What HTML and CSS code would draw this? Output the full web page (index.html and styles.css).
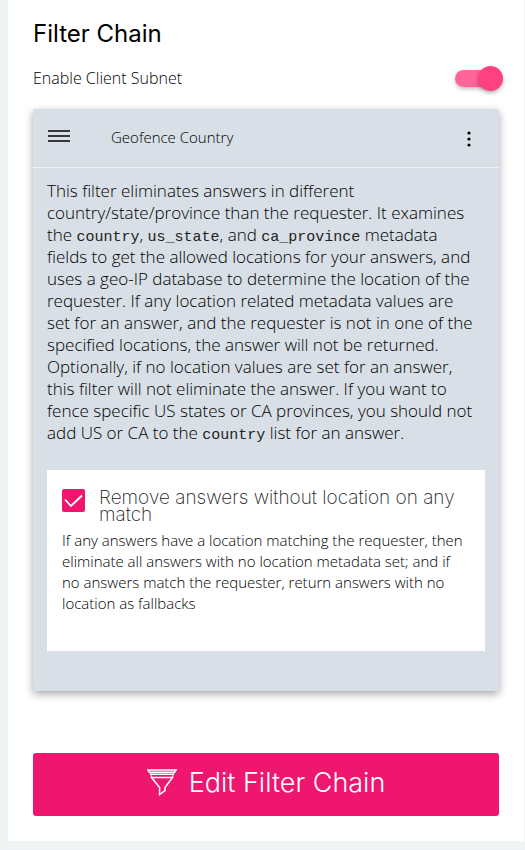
FILE: index.html
```html
<!DOCTYPE html>
<html lang="en">
<head>
<meta charset="utf-8">
<title>Filter Chain</title>
<link rel="stylesheet" href="styles.css">
</head>
<body>
<main class="panel">
  <h1 class="title">Filter Chain</h1>
  <div class="subnet">
    <label for="subnet">Enable Client Subnet</label>
    <input class="switch" type="checkbox" role="switch" id="subnet" checked>
  </div>
  <section class="card">
    <header class="card-head">
      <button class="icon-btn" type="button" aria-label="Reorder">
        <svg width="23" height="12" viewBox="0 0 23 12"><path d="M1 1h22M1 6h22M1 11h22" stroke="#000" stroke-width="1.7"/></svg>
      </button>
      <h2 class="card-title">Geofence Country</h2>
      <button class="icon-btn" type="button" aria-label="More options">
        <svg width="4" height="16" viewBox="0 0 4 16"><circle cx="2" cy="2" r="1.6"/><circle cx="2" cy="8" r="1.6"/><circle cx="2" cy="14" r="1.6"/></svg>
      </button>
    </header>
    <div class="card-body">
      <p class="description">This filter eliminates answers in different<br>
        country/state/province than the requester. It examines<br>
        the <code>country</code>, <code>us_state</code>, and <code>ca_province</code> metadata<br>
        fields to get the allowed locations for your answers, and<br>
        uses a geo-IP database to determine the location of the<br>
        requester. If any location related metadata values are<br>
        set for an answer, and the requester is not in one of the<br>
        specified locations, the answer will not be returned.<br>
        Optionally, if no location values are set for an answer,<br>
        this filter will not eliminate the answer. If you want to<br>
        fence specific US states or CA provinces, you should not<br>
        add US or CA to the <code>country</code> list for an answer.</p>
      <div class="option">
        <div class="option-head">
          <span class="check">
            <input type="checkbox" id="remove" aria-describedby="remove-help" checked>
            <svg width="23" height="23" viewBox="0 0 23 23"><path d="M3 10.5l6 6.5L20 6.5" fill="none" stroke="#fff" stroke-width="1.8"/></svg>
          </span>
          <label for="remove">Remove answers without location on any match</label>
        </div>
        <p class="help" id="remove-help">If any answers have a location matching the requester, then eliminate all answers with no location metadata set; and if no answers match the requester, return answers with no location as fallbacks</p>
      </div>
    </div>
  </section>
  <button class="edit" type="button">
    <svg width="30" height="27" viewBox="0 0 30 27" fill="none" stroke="#fff" stroke-width="1.5"><path d="M.8 1h28.4L27.5 3.2H2.5zM3 5.3h24M4.5 8.5h21L18 18.5v3.2L12.6 25.5v-7z"/><path d="M2.5 3.2l2.5 5M27.5 3.2L25 8.5" stroke-width="1"/></svg>
    Edit Filter Chain
  </button>
</main>
</body>
</html>
```

FILE: styles.css
```css
* { box-sizing: border-box; }

body {
  margin: 0;
  background: #f0f4f5;
  color: #000;
  font: 300 15px/21px "Open Sans", sans-serif;
}

h1, h2, p { margin: 0; }

button {
  border: 0;
  cursor: pointer;
}

svg { display: block; }

.panel {
  margin: 0 1px 9px 8px;
  padding: 20px 25px 25px;
  background: #fff;
}

.title {
  font: 400 24px/28px Inter, sans-serif;
}

.subnet {
  display: flex;
  align-items: center;
  justify-content: space-between;
  height: 28px;
  margin: 16px 0 17px;
}

.subnet label {
  font-size: 16px;
}

.switch {
  position: relative;
  appearance: none;
  width: 44px;
  height: 17px;
  margin: 0;
  border-radius: 9px;
  background: #ff6697;
  box-shadow: 0 2px 4px rgba(0, 0, 0, 0.25);
}

.switch::after {
  content: "";
  position: absolute;
  top: -4px;
  right: -4px;
  width: 25px;
  height: 25px;
  border-radius: 50%;
  background: #ff4081;
  box-shadow: 0 2px 4px rgba(0, 0, 0, 0.3);
}

.card {
  border-radius: 2px;
  background: #d8dfe6;
  box-shadow: 0 3px 8px rgba(0, 0, 0, 0.35);
}

.card-head {
  display: flex;
  align-items: center;
  height: 59px;
  padding: 0 14px 4px;
  border-bottom: 1px solid #eef2f5;
}

.icon-btn {
  padding: 0;
  background: none;
}

.icon-btn:last-child { padding: 6px 14px 0; }

.card-title {
  flex: 1;
  padding: 2px 0 0 41px;
  font-size: 15px;
  font-weight: 300;
}

.card-body { padding: 12px 14px 40px; }

.description {
  font-size: 17px;
  line-height: 22px;
}

.description code {
  color: #222;
  font: 300 15px/1 "Liberation Mono", monospace;
}

.option {
  margin-top: 26px;
  padding: 19px 15px 37px;
  background: #fff;
}

.option-head {
  display: flex;
  gap: 14px;
  color: #222;
  font: 200 19px/17px Inter, sans-serif;
}

.check {
  display: grid;
  flex: none;
  height: 23px;
}

.check > * { grid-area: 1 / 1; }

.check input {
  appearance: none;
  width: 23px;
  height: 23px;
  margin: 0;
  border-radius: 2px;
  background: #ee166f;
}

.check svg { pointer-events: none; }

.help { margin-top: 7px; }

.edit {
  display: flex;
  align-items: center;
  justify-content: center;
  gap: 12px;
  width: 100%;
  height: 63px;
  margin-top: 62px;
  padding: 0 0 4px;
  border-radius: 3px;
  background: #ee166f;
  color: #fff;
  font: 300 27px/30px Inter, sans-serif;
}
```
